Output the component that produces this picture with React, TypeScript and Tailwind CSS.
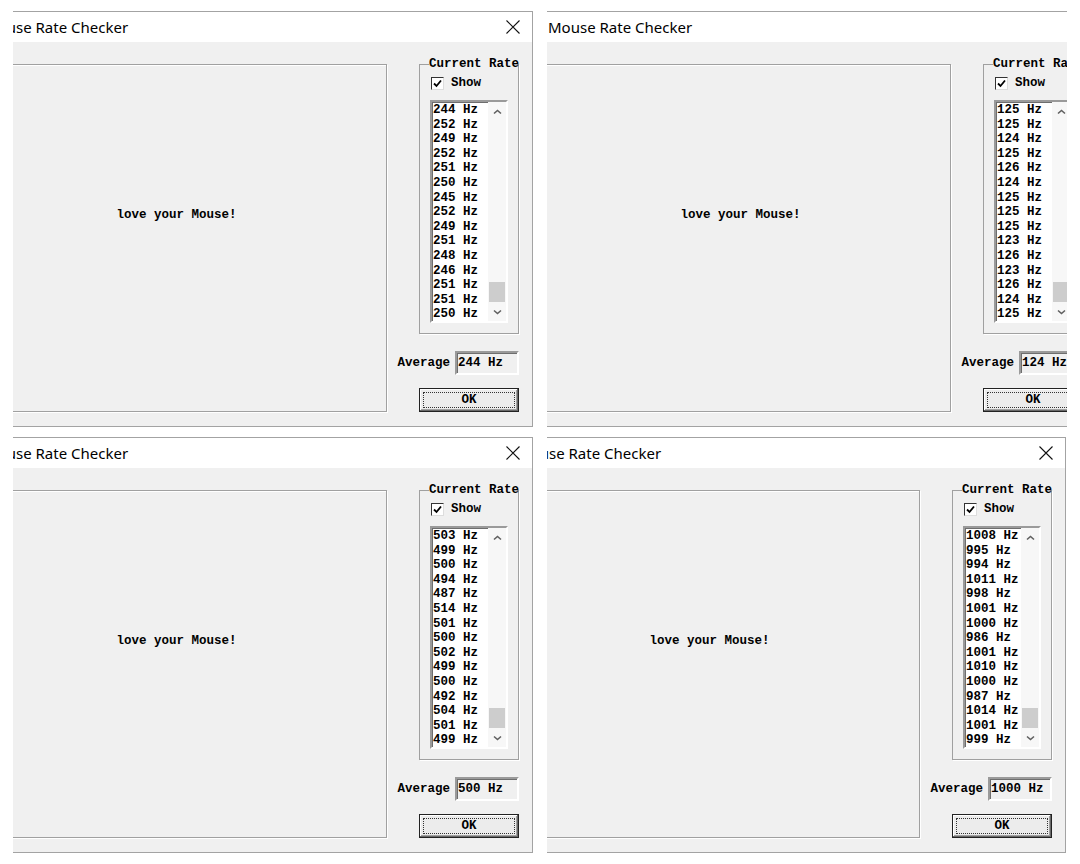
import React from "react";

type Panel = {
  rates: number[];
  average: number;
  shift: string;
};

const panels: Panel[] = [
  {
    rates: [244, 252, 249, 252, 251, 250, 245, 252, 249, 251, 248, 246, 251, 251, 250],
    average: 244,
    shift: "-ml-[53px]",
  },
  {
    rates: [125, 125, 124, 125, 126, 124, 125, 125, 125, 123, 126, 123, 126, 124, 125],
    average: 124,
    shift: "-ml-[23px]",
  },
  {
    rates: [503, 499, 500, 494, 487, 514, 501, 500, 502, 499, 500, 492, 504, 501, 499],
    average: 500,
    shift: "-ml-[53px]",
  },
  {
    rates: [1008, 995, 994, 1011, 998, 1001, 1000, 986, 1001, 1010, 1000, 987, 1014, 1001, 999],
    average: 1000,
    shift: "-ml-[54px]",
  },
];

const mono = "font-['Liberation_Mono',monospace] font-bold text-[12.5px] text-black";

function Chevron({ down }: { down?: boolean }) {
  return (
    <svg width="9" height="6" viewBox="0 0 9 6">
      <path
        d={down ? "M1 1.5 L4.5 4.5 L8 1.5" : "M1 4.5 L4.5 1.5 L8 4.5"}
        fill="none"
        stroke="#606060"
        strokeWidth="1.6"
      />
    </svg>
  );
}

function RateWindow({ rates, average, shift }: Panel) {
  return (
    <div className={`w-[573px] h-[416px] flex flex-col border-t border-r border-b border-[#a3a3a3] ${shift}`}>
      {/* Title bar */}
      <div className="h-[30px] shrink-0 bg-white flex items-center justify-between pl-[24px] pr-[11px]">
        <span className="font-['Noto_Sans',sans-serif] text-[15px] text-black">Mouse Rate Checker</span>
        <svg width="16" height="16" viewBox="0 0 16 16">
          <path d="M1.5 1.5 L14.5 14.5 M14.5 1.5 L1.5 14.5" stroke="#111" strokeWidth="1.1" />
        </svg>
      </div>

      {/* Body */}
      <div className="flex-1 bg-[#f0f0f0] flex pl-[6px] pt-[22px]">
        {/* Drawing area */}
        <div className="w-[421px] h-[348px] border border-[#a0a0a0] shadow-[inset_1px_1px_0_#fff,1px_1px_0_#fff] pt-[135px] text-center">
          <span className={mono}>love your Mouse!</span>
        </div>

        {/* Right column */}
        <div className="ml-[12px] w-[120px] flex flex-col items-end">
          <fieldset className="w-[100px] min-w-0 -mt-[7px] border border-[#a0a0a0] pl-[10px] pb-[10px] shadow-[1px_1px_0_#fff]">
            <legend className={`${mono} w-[88px] -ml-[1px] p-0 leading-[14px] whitespace-nowrap overflow-visible`}>
              Current Rate
            </legend>

            <label className="mt-[6px] ml-[1px] flex items-center gap-[7px] h-[13px]">
              <span className="w-[13px] h-[13px] bg-white border border-[#333] border-r-[#ddd] border-b-[#ddd] flex items-center justify-center">
                <svg width="9" height="9" viewBox="0 0 9 9">
                  <path d="M1 4.5 L3.5 7 L8 1.5" fill="none" stroke="#000" strokeWidth="1.8" />
                </svg>
              </span>
              <span className={`${mono} leading-[13px]`}>Show</span>
            </label>

            <div className="mt-[10px] w-[78px] h-[223px] flex border-2 border-[#9a9a9a] border-r-white border-b-white shadow-[inset_1px_1px_0_#6e6e6e] bg-white">
              <div className={`${mono} flex-1 pl-[1px] pt-[1px] leading-[14.6px] overflow-hidden`}>
                {rates.map((r, i) => (
                  <div key={i} className="whitespace-nowrap">
                    {r} Hz
                  </div>
                ))}
              </div>
              <div className="w-[18px] flex flex-col bg-[#f7f7f7]">
                <div className="h-[19px] flex items-center justify-center">
                  <Chevron />
                </div>
                <div className="flex-1" />
                <div className="h-[20px] mx-[1px] bg-[#cdcdcd]" />
                <div className="h-[19px] flex items-center justify-center">
                  <Chevron down />
                </div>
              </div>
            </div>
          </fieldset>

          <div className="mt-[17px] flex items-center gap-[5px]">
            <span className={mono}>Average</span>
            <div className={`${mono} w-[64px] h-[24px] border-2 border-[#9a9a9a] border-r-white border-b-white shadow-[inset_1px_1px_0_#6e6e6e] bg-[#f0f0f0] pl-[1px] leading-[20px]`}>
              {average} Hz
            </div>
          </div>

          <button className="mt-[13px] w-[100px] h-[24px] bg-[#ececec] border border-[#222] shadow-[inset_-1px_-1px_0_#696969,inset_1px_1px_0_#fff,inset_-2px_-2px_0_#a0a0a0] p-[3px]">
            <div className={`${mono} w-full h-full border border-dotted border-[#333] flex items-center justify-center leading-none`}>
              OK
            </div>
          </button>
        </div>
      </div>
    </div>
  );
}

export default function App() {
  return (
    <div className="w-[1080px] h-[864px] bg-white pl-[13px] pt-[11px] grid grid-cols-[520px_520px] grid-rows-[416px_416px] gap-x-[14px] gap-y-[10px]">
      {panels.map((p, i) => (
        <div key={i} className="w-[520px] h-[416px] overflow-hidden">
          <RateWindow {...p} />
        </div>
      ))}
    </div>
  );
}
